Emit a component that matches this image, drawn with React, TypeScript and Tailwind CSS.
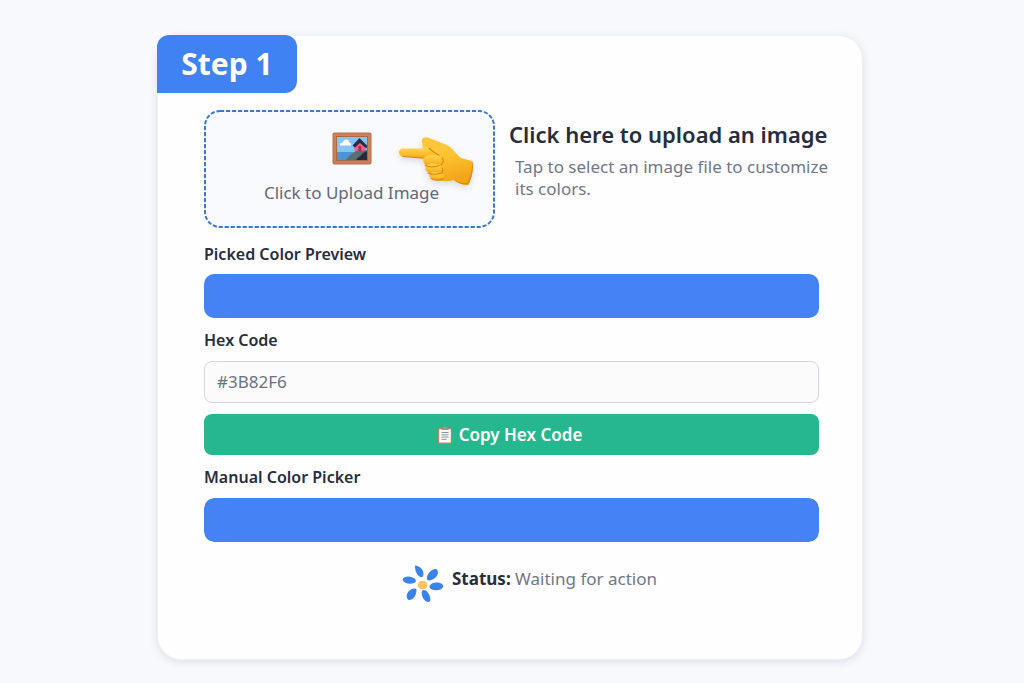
import { useState } from "react";

function PictureIcon() {
  return (
    <svg viewBox="0 0 40 33" className="h-[33px] w-10" aria-hidden="true">
      <rect x="0.5" y="0.5" width="39" height="32" rx="2" fill="#b96f4d" />
      <rect x="1.500" y="1.500" width="37" height="30" rx="1.500" fill="#cb8059" />
      <rect x="4" y="4" width="32" height="25" fill="#a9674c" />
      <rect x="5" y="5" width="30" height="23" fill="#83c5f3" />
      <rect x="5" y="20" width="30" height="8" fill="#4c94d6" />
      <path d="M8 13.500c-.6-2 1.200-3 2.600-2.600C11.300 8 14 6.500 16 8.100c1 .8 1.300 2 1.300 2.700 1.500.1 2.300 1.500 1.700 2.700z" fill="#fff" />
      <path d="M22 14l5.500-6.500L34 14v7H23z" fill="#e8648c" />
      <path d="M14 28c2.500-4 5-5.500 8-7.500 3-2 6-2.500 9-1.500l4-1v10z" fill="#59706f" />
      <path d="M24 28c2-3 5-4 7-7l4-2v9z" fill="#252b3c" />
      <path d="M26.300 19v-4c.4-1.600 2.500-1.600 3 0v4z" fill="#a92f57" />
      <path d="M20.500 13.500l7-7.500 7.500 7.500V16l-2.500-1-4.500-4-5 4.500z" fill="#2b2d42" />
    </svg>
  );
}

function PointingHand() {
  return (
    <svg viewBox="0 0 76 52" className="h-[52px] w-[76px] drop-shadow-md" aria-hidden="true">
      <defs>
        <linearGradient id="skin" x1="0" y1="0" x2="0.3" y2="1">
          <stop offset="0" stopColor="#ffd34f" />
          <stop offset="0.550" stopColor="#fdbf2c" />
          <stop offset="1" stopColor="#f3a51a" />
        </linearGradient>
        <linearGradient id="finger" x1="0" y1="0" x2="0" y2="1">
          <stop offset="0" stopColor="#ffd24b" />
          <stop offset="0.600" stopColor="#fcbb28" />
          <stop offset="1" stopColor="#eca01c" />
        </linearGradient>
      </defs>
      <path d="M24 4C25 .8 29 1 32 2.500L49 9c6 3 9 9 14 13l11 3c2 4 .8 15-3.500 23.500-4 1-10-1-15-4.500-5 2-14 2-20-2L25 18z" fill="url(#skin)" />
      <path d="M5 12.500h25c4 0 7 2 7 5s-3 5-7 5L5 20.500c-5.500-.5-5.500-8 0-8z" fill="url(#finger)" />
      <path d="M24 4C25 .8 29 1 32 2.500L48 9l-7 11c-4-1-7-5-10-7.500-3.500-2.500-8-4.500-7-8.500z" fill="#fec63a" />
      <path d="M27 21c3-3 11-3 15-.5 3 2 2.500 7-1 8.500-4 1.500-10 1.500-13.500-.5-3-2-3-5.500-.5-7.500z" fill="url(#finger)" />
      <path d="M29 29c3-2 10-1.500 13.500 0 3 2 2 6.500-1 8-3 1.200-9 .8-12-1s-3-5.500-.5-7z" fill="url(#finger)" />
      <path d="M32 37c3-2 9-1 12 .5 3 2 2 5.500-1 6.500-3 .8-8 0-10.500-2-2-1.500-2-4-.5-5z" fill="url(#finger)" />
      <path d="M5 20.500l20 1.700M27 29c4 2.500 10 2 14 .500M30 37c3 1.500 9 1.500 12 .500M33 42.500c4 2.500 10 2 12 0M31 12.500c3 2 6 5.500 10 6.500M44 22c2 2 1.500 5-1 7M44 32c1.500 2 1 4-1 5.500" fill="none" stroke="#d98312" strokeWidth="1.100" strokeLinecap="round" />
      <path d="M74 25c2 4 .8 15-3.500 23.500-4 1-10-1-15-4.500 7 2.500 11 3.500 14 2.500 3-6.500 5-13.500 4.500-21.500z" fill="#e18e0d" />
    </svg>
  );
}

function ClipboardIcon() {
  return (
    <svg viewBox="0 0 16 18" className="h-[18px] w-4" aria-hidden="true">
      <rect x="1" y="2" width="14" height="16" rx="1.500" fill="#bd8659" />
      <rect x="2.200" y="3.200" width="11.600" height="13.300" fill="#f8fafb" />
      <path d="M4.500 4V2.600h1.800C6.500 1 7 .3 8 .3s1.500.7 1.700 2.300h1.800V4z" fill="#8e9ba6" />
      <path d="M4.500 6.500h7M4.500 8.800h7M4.500 11h7M4.500 13.300h5" stroke="#8795a2" strokeWidth="1" />
    </svg>
  );
}

function FlowerIcon() {
  return (
    <svg viewBox="0 0 42 38" className="h-[38px] w-[42px]" aria-hidden="true">
      <g fill="#3b82ec">
        <path d="M13 .5c5 .5 8.500 4 8.500 8.500 0 3-2 4-4 2.500C14 9 13 5 13 .5z" />
        <path d="M34.500 4c3 3 1 8-3 10-3 1.800-6 2-6.500 0-.8-4 4-10.500 9.500-10z" />
        <path d="M.5 14.500c1-3 6-4 10-2 3.500 1.500 4.500 4 2 5.300-4 2-10.500 1-12-3.300z" />
        <path d="M27.500 21c1.500-3 5-4 8.500-3.500 3 .4 5 2 5.500 3.700-2 4-6 4.500-9.500 3.800-3-.6-5-2-4.500-4z" />
        <path d="M6.500 35c-3.500-3-1.500-8.500 2.500-10.500 2.500-1.300 5.500-1.500 5.500.5 0 5-3 10.500-8 10z" />
        <path d="M20 26c1.500-2 4.500-.5 6.200 2 2 3 3 7 1 9-4.500.8-8.700-6-7.200-11z" />
      </g>
      <ellipse cx="20.500" cy="20" rx="4.800" ry="4.300" fill="#fac35c" />
    </svg>
  );
}

function DashedOutline() {
  return (
    <svg className="absolute inset-0 h-full w-full overflow-visible text-[#4078c8]" aria-hidden="true">
      <rect x="0" y="0" width="100%" height="100%" rx="15" fill="none" stroke="currentColor" strokeWidth="2" strokeDasharray="4.200 1.800" />
    </svg>
  );
}

export default function App() {
  const [color, setColor] = useState("#4583f5");
  const [hex, setHex] = useState("#3B82F6");

  const pick = (value: string) => {
    setColor(value);
    setHex(value.toUpperCase());
  };

  return (
    <main className="min-h-screen bg-[#f7f9fc] pt-[35px] pr-4 pb-6 pl-4 font-['Noto_Sans',sans-serif] text-[#272d3d]">
      <section className="mx-auto w-full max-w-[706px] -translate-x-0.5 rounded-3xl border border-[#eef0f4] bg-[#fefefe] pb-14 shadow-[0_2px_8px_rgba(30,41,80,0.12)]">
        <h1 className="-mt-px -ml-px flex h-[58px] w-[140px] items-center justify-center rounded-t-xl rounded-br-xl bg-[#4082f2] text-3xl font-bold text-white">
          Step 1
        </h1>

        <div className="mt-[17px] flex gap-3.5 pr-6 pl-[46px]">
          <label className="relative flex h-[118px] w-[291px] shrink-0 cursor-pointer flex-col items-center rounded-2xl border border-transparent bg-[#f9fafd] pt-[21px] pl-1">
            <DashedOutline />
            <input type="file" accept="image/*" className="sr-only" />
            <PictureIcon />
            <span className="mt-4 text-[17px] leading-6 text-[#626879]">Click to Upload Image</span>
            <span className="absolute top-[25px] right-5">
              <PointingHand />
            </span>
          </label>
          <div className="min-w-0 pt-2">
            <h2 className="text-[22px] leading-8 font-semibold whitespace-nowrap">Click here to upload an image</h2>
            <p className="mt-1.5 px-1.5 text-[17px] leading-[22px] text-[#71778a]">
              Tap to select an image file to customize its colors.
            </p>
          </div>
        </div>

        <div className="flex flex-col pr-[43px] pl-[46px]">
          <h3 className="mt-3 text-base leading-7 font-semibold">Picked Color Preview</h3>
          <div className="mt-1.5 h-11 rounded-[10px]" style={{ backgroundColor: color }} />

          <label htmlFor="hex" className="mt-2 text-base leading-7 font-semibold">
            Hex Code
          </label>
          <input
            id="hex"
            type="text"
            value={hex}
            onChange={(e) => setHex(e.target.value)}
            className="mt-[7px] h-[42px] rounded-lg border border-[#d3d6df] bg-[#fbfbfc] px-3 pb-0.5 text-[17px] text-[#6a7182]"
          />
          <button
            type="button"
            onClick={() => navigator.clipboard?.writeText(hex)}
            className="mt-[11px] flex h-[41px] items-center justify-center gap-1.5 rounded-lg bg-[#26b78e] pr-1 text-[17px] font-semibold text-white"
          >
            <ClipboardIcon />
            Copy Hex Code
          </button>

          <label htmlFor="picker" className="mt-2 text-base leading-7 font-semibold">
            Manual Color Picker
          </label>
          <input
            id="picker"
            type="color"
            value={color}
            onChange={(e) => pick(e.target.value)}
            className="mt-[7px] h-11 w-full cursor-pointer appearance-none rounded-[10px] [&::-webkit-color-swatch]:rounded-[10px] [&::-webkit-color-swatch]:border-none [&::-webkit-color-swatch-wrapper]:p-0"
          />

          <div className="mt-[23px] flex items-start justify-center gap-2 pl-9">
            <FlowerIcon />
            <p className="text-[17px] leading-7 text-[#717786]">
              <strong className="font-bold text-[#272d3d]">Status:</strong> Waiting for action
            </p>
          </div>
        </div>
      </section>
    </main>
  );
}
